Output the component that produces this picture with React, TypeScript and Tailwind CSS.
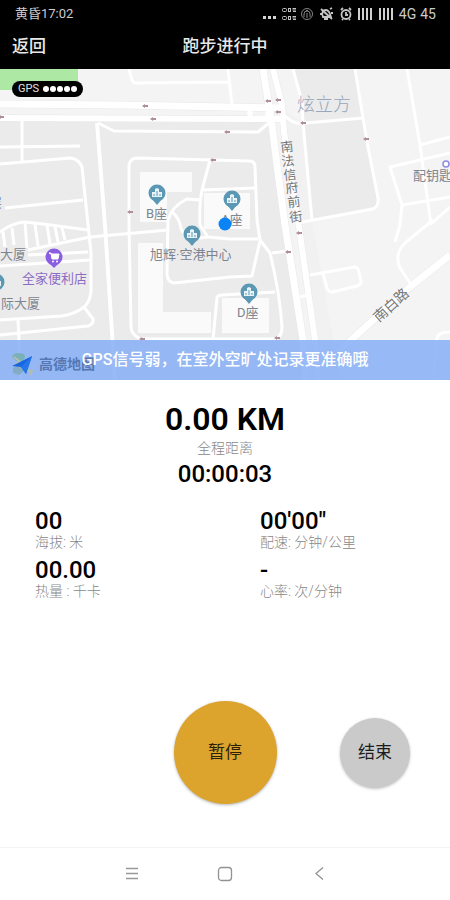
const BUILDING_PINS = [
  { x: 157, y: 124 },
  { x: 232, y: 130 },
  { x: 192, y: 165 },
  { x: 249, y: 223 },
  { x: -4, y: 213 },
];

const MINOR_ROADS = [
  "M129 0L132 11Q133 14 136 14L230 13M228 0L232 36",
  "M98 54L114 62L258 63L270 53",
  "M22 52V92M0 78L80 77",
  "M0 95L70 89Q79 90 82 98L91 184V222Q90 233 84 238Q75 245 62 247L0 251",
  "M84 238L93 250Q94 255 88 257L0 266M18 251L21 311",
  "M5 139L83 131",
  "M0 163Q12 154 24 153L43 155L88 161M28 181L90 168L168 161",
  "M28 186L88 183M0 197L90 191",
  "M3 163L5 178M12 159L14 176M25 154L27 179M35 155L38 177M47 156L50 175M55 158L58 173M62 159L65 171",
  "M129 156V96Q130 89 138 89L249 92Q255 92 255 98L257 151L260 171L270 184Q280 225 282 258Q282 269 274 270L140 270Q131 265 131 258Z",
  "M210 91L202 121Q199 136 200 156L208 168L230 170H258M203 121L255 119",
  "M200 131L187 130Q172 137 168 151L167 204Q167 213 174 214L230 208L252 207L260 172M171 142Q180 149 181 160",
  "M213 270L217 229Q217 226 222 226L275 223M181 160Q184 166 192 170L208 168",
  "M272 184L288 182M300 228L308 226",
  "M293 0L302 33L303 54L312 151M283 45Q294 57 306 54L363 49",
  "M355 0L363 49L367 73L378 129Q379 137 373 140L297 154",
  "M407 0L420 76L431 156M420 76L450 68M450 84L390 98L402 136L400 156L395 173M402 136L450 128M432 154L450 138",
  "M433 151L405 174Q394 185 400 199L410 214",
  "M310 206L355 198Q358 198 359 203L361 212Q361 216 357 217L332 223Q328 223 327 219L323 205",
  "M450 263Q437 263 437 270L433 311",
];

const STREET_CHARS = [
  { char: "南", x: 287, y: 78 },
  { char: "法", x: 288, y: 92 },
  { char: "信", x: 290, y: 106 },
  { char: "府", x: 292, y: 119 },
  { char: "前", x: 294, y: 133 },
  { char: "街", x: 296, y: 148 },
];

const ARROWS = [
  [145, 37],
  [153, 50],
  [1, 48],
  [227, 63],
  [268, 32],
  [278, 31],
  [278, 43],
  [303, 54],
  [366, 70],
  [130, 143],
  [213, 91],
  [288, 183],
  [299, 164],
  [142, 270],
  [277, 269],
];

const STATS = [
  { value: "00", label: "海拔: 米" },
  { value: "00'00\"", label: "配速: 分钟/公里" },
  { value: "00.00", label: "热量 : 千卡" },
  { value: "-", label: "心率: 次/分钟" },
];

function BuildingPin({ x, y }: { x: number; y: number }) {
  return (
    <g transform={`translate(${x} ${y})`}>
      <path d="M-5 6L0 12L5 6Z" fill="#5b98b3" />
      <circle r="8.5" fill="#5b98b3" />
      <path d="M-5 4V-1H-2V-4L0 -5L2 -4V-1H5V4Z" fill="#e9f4f8" />
      <path d="M-3 1V3M0 -2V3M3 1V3" stroke="#5b98b3" />
    </g>
  );
}

function StreetMap() {
  return (
    <svg
      viewBox="0 0 450 311"
      preserveAspectRatio="xMidYMid slice"
      className="block h-[311px] w-full"
      role="img"
      aria-label="地图"
      fontFamily='Roboto, "Noto Sans CJK SC", sans-serif'
    >
      <rect width="450" height="311" fill="#f4f4f5" />
      <path d="M0 50H272L306 311H0Z" fill="#ebebec" />
      <path d="M282 40L303 54L312 151L340 311H318L285 63Z" fill="#f1f1f2" />
      <path d="M295 0H355L378 137L312 151L303 54Z" fill="#ebebec" />
      <rect width="78" height="21" fill="#ade8a5" />

      <g fill="#fafafb">
        <path d="M140 103H192V123H167V153H140Z" />
        <rect x="204" y="124" width="46" height="36" />
        <path d="M138 174H163V243H211V264H138Z" />
        <rect x="222" y="229" width="47" height="35" />
      </g>

      <g fill="none" stroke="#e8e8e9" strokeLinejoin="round">
        <path d="M0 35L120 36L285 39" strokeWidth="8" />
        <path d="M0 49L285 50" strokeWidth="7" />
        <path d="M97 54L105 156L112 264L115 311" strokeWidth="5" />
        <path d="M263 0L272 56L277 96L285 156L303 271L306 311" strokeWidth="8" />
        <path d="M273 0L282 36L284 63L298 151L315 271L318 311" strokeWidth="7" />
        <path d="M450 186L410 218L370 254L322 297" strokeWidth="8" />
      </g>
      <g fill="none" stroke="#ffffff" strokeLinejoin="round">
        {MINOR_ROADS.map((d) => (
          <path key={d} d={d} strokeWidth="3" />
        ))}
        <path d="M0 35L120 36L285 39" strokeWidth="7" />
        <path d="M0 49L285 50" strokeWidth="6" />
        <path d="M97 54L105 156L112 264L115 311" strokeWidth="4" />
        <path d="M263 0L272 56L277 96L285 156L303 271L306 311" strokeWidth="7" />
        <path d="M273 0L282 36L284 63L298 151L315 271L318 311" strokeWidth="6" />
        <path d="M450 186L410 218L370 254L322 297" strokeWidth="7" />
        <path d="M250 36V53M268 36V53" strokeWidth="5" />
      </g>

      <g fill="#b08f94">
        {ARROWS.map(([x, y]) => (
          <path key={`${x}-${y}`} d={`M${x - 3} ${y}L${x} ${y - 2}V${y - 1}H${x + 3}V${y + 1}H${x}V${y + 2}Z`} />
        ))}
      </g>

      {BUILDING_PINS.map((pin) => (
        <BuildingPin key={`${pin.x}-${pin.y}`} x={pin.x} y={pin.y} />
      ))}
      <g transform="translate(54 188)">
        <path d="M-5 6L0 11L5 6Z" fill="#8a5ee0" />
        <circle r="8.5" fill="#8a5ee0" />
        <path d="M-5 -4H-3L-2 2H4L5 -3H-3Z" fill="#ffffff" stroke="#ffffff" />
        <circle cx="-1" cy="4.5" r="1" fill="#ffffff" />
        <circle cx="3" cy="4.5" r="1" fill="#ffffff" />
      </g>
      <circle cx="446" cy="95" r="3" fill="#ffffff" stroke="#8f8ce0" strokeWidth="1.5" />

      <g fill="#7d8590" fontSize="13">
        <text x="146" y="149">B座</text>
        <text x="221" y="155">A座</text>
        <text x="237" y="248">D座</text>
        <text x="150" y="190">旭辉·空港中心</text>
        <text x="0" y="190">大厦</text>
        <text x="1" y="239">际大厦</text>
        <text x="-11" y="138">层</text>
        <text x="413" y="111">配钥匙</text>
        <text x="22" y="214" fill="#8b6cc4">
          全家便利店
        </text>
        <text x="297" y="42" fontSize="18" fontWeight="300" fill="#98a6ba">
          炫立方
        </text>
        {STREET_CHARS.map(({ char, x, y }) => (
          <text
            key={char}
            transform={`translate(${x} ${y}) rotate(-7)`}
            textAnchor="middle"
            dominantBaseline="central"
            fill="#777777"
          >
            {char}
          </text>
        ))}
        <text
          transform="translate(391 236) rotate(-42)"
          textAnchor="middle"
          dominantBaseline="central"
          fontSize="14"
          fill="#777777"
        >
          南白路
        </text>
      </g>

      <circle cx="225" cy="155" r="6.5" fill="#0a84f5" />
    </svg>
  );
}

function MapLogo() {
  return (
    <svg viewBox="0 0 24 24" aria-hidden="true" className="size-6">
      <path d="M1 5Q2 1 8 1Q14 1 14 5L12 9H5Z" fill="#79b0b9" />
      <path d="M2 16L7 13L13 19L8 23L2 21Z" fill="#83abc4" />
      <path d="M3 5L8 9L4 14M13 18L21 19L19 23" fill="none" stroke="#b3bfae" strokeWidth="2" />
      <path d="M21 4L1 14L10 15L15 22Z" fill="#1767df" />
      <path d="M21 4L10 15L15 22Z" fill="#2476ea" />
    </svg>
  );
}

function StatusIcons() {
  return (
    <svg
      viewBox="0 0 132 16"
      aria-hidden="true"
      className="h-4 w-[132px]"
      fill="none"
      stroke="#c4c4c4"
    >
      <g fill="#d5d5d5" stroke="none">
        <rect x="0" y="10" width="3" height="3" />
        <rect x="5" y="10" width="3" height="3" />
        <rect x="10" y="10" width="3" height="3" />
      </g>
      <g strokeWidth="1">
        <rect x="19.5" y="2.5" width="4" height="3" rx="1" />
        <rect x="25.5" y="2.5" width="2" height="3" />
        <path d="M29.5 2.5H33M30 5.5H33M29.5 4H33" />
        <rect x="19.5" y="10.5" width="4" height="3" rx="1" />
        <rect x="25.5" y="10.5" width="2" height="3" />
        <path d="M29.5 10.5H33M30 13.5H33M29.5 12H33" />
      </g>
      <g stroke="#858585">
        <circle cx="44" cy="8" r="5.5" />
        <path d="M41 11V8A3 3 0 0 1 47 8V11M44 7V12M42 6L44 4L46 6" />
      </g>
      <g strokeWidth="1.8">
        <path d="M60 11C58 7 60 4 63 4S67 7 68 11ZM58 3L69 13M61 13H65M57 8H59M68 7H70M67 3L69 2" />
      </g>
      <g strokeWidth="1.8">
        <circle cx="83" cy="8.5" r="4.5" />
        <path d="M83 6V9H85M78 4L80 2M86 2L88 4M80 13L79 14M86 13L87 14" />
      </g>
      <g stroke="#cfcfcf" strokeWidth="2">
        <path d="M96 2V14M100 2V14M104 2V14M108 2V14" />
        <path d="M117 2V14M121 2V14M125 2V14M129 2V14" />
      </g>
    </svg>
  );
}

export default function App() {
  return (
    <div className="flex min-h-screen flex-col bg-white font-[Roboto,'Noto_Sans_CJK_SC',sans-serif] text-black">
      <header className="bg-black text-[#e8e8e8]">
        <div className="flex h-7 items-center justify-between pr-[14px] pl-[15px] text-[13px] leading-4 text-[#cccccc]">
          <span>黄昏17:02</span>
          <div className="flex items-center gap-1 text-[14px]">
            <StatusIcons />
            <span>4G</span>
            <span>45</span>
          </div>
        </div>
        <div className="grid h-[41px] grid-cols-3 items-start px-3 pt-1 text-[17px] leading-7 font-medium">
          <button type="button" className="justify-self-start">
            返回
          </button>
          <h1 className="text-center">跑步进行中</h1>
        </div>
      </header>

      <section className="relative overflow-hidden">
        <StreetMap />
        <div className="absolute top-3 left-3 flex h-4 items-center gap-1 rounded-full bg-black pr-[6px] pl-[6px] text-[11px] leading-4 text-[#e0e0e0]">
          GPS
          <span className="flex gap-px">
            {[0, 1, 2, 3, 4].map((dot) => (
              <span key={dot} className="size-[6px] rounded-full bg-white" />
            ))}
          </span>
        </div>
        <div className="absolute inset-x-0 bottom-0 flex h-10 items-center justify-center bg-[#86aef5]/85">
          <div className="absolute bottom-1 left-[11px] flex items-center gap-1 text-[14px] leading-6 font-bold text-[#5577b3]">
            <MapLogo />
            高德地图
          </div>
          <p className="relative text-[16px] leading-6 font-medium text-white">
            GPS信号弱，在室外空旷处记录更准确哦
          </p>
        </div>
      </section>

      <main className="flex flex-1 flex-col">
        <div className="pt-5 text-center">
          <p className="text-[32px] leading-[38px] font-semibold">0.00 KM</p>
          <p className="text-[14px] leading-5 font-light text-[#888888]">全程距离</p>
          <p className="text-2xl leading-8 font-medium">00:00:03</p>
        </div>

        <dl className="mt-[17px] grid grid-cols-2 gap-y-[7px]">
          {STATS.map(({ value, label }) => (
            <div key={label} className="flex flex-col-reverse pl-[35px]">
              <dt className="text-[14px] leading-[14px] font-light text-[#888888]">{label}</dt>
              <dd className="text-2xl leading-7 font-medium">{value}</dd>
            </div>
          ))}
        </dl>

        <div className="mt-auto grid grid-cols-3 items-center justify-items-center pb-[43px] text-[17px]">
          <button
            type="button"
            className="col-start-2 size-[103px] rounded-full bg-[#dca32d] text-[#2b210b] shadow-[0_1px_3px_rgba(0,0,0,0.3)]"
          >
            暂停
          </button>
          <button
            type="button"
            className="size-[70px] rounded-full bg-[#cacaca] text-[#1c1c1c] shadow-[0_1px_3px_rgba(0,0,0,0.25)]"
          >
            结束
          </button>
        </div>
      </main>

      <nav className="flex h-[53px] items-center justify-center gap-[78px] border-t border-[#f4f4f4]">
        <button type="button" aria-label="菜单">
          <svg viewBox="0 0 16 16" className="size-4" fill="none" stroke="#999999" strokeWidth="1.3">
            <path d="M3 2.5H15M3 7.5H15M3 12.5H15" />
          </svg>
        </button>
        <button type="button" aria-label="主页">
          <svg viewBox="0 0 16 16" className="size-4" fill="none" stroke="#929292" strokeWidth="1.3">
            <rect x="1.5" y="1.5" width="13" height="13" rx="3" />
          </svg>
        </button>
        <button type="button" aria-label="后退">
          <svg viewBox="0 0 16 16" className="size-4" fill="none" stroke="#929292" strokeWidth="1.3">
            <path d="M12 1.5L5 7.5L12 13.500" />
          </svg>
        </button>
      </nav>
    </div>
  );
}
